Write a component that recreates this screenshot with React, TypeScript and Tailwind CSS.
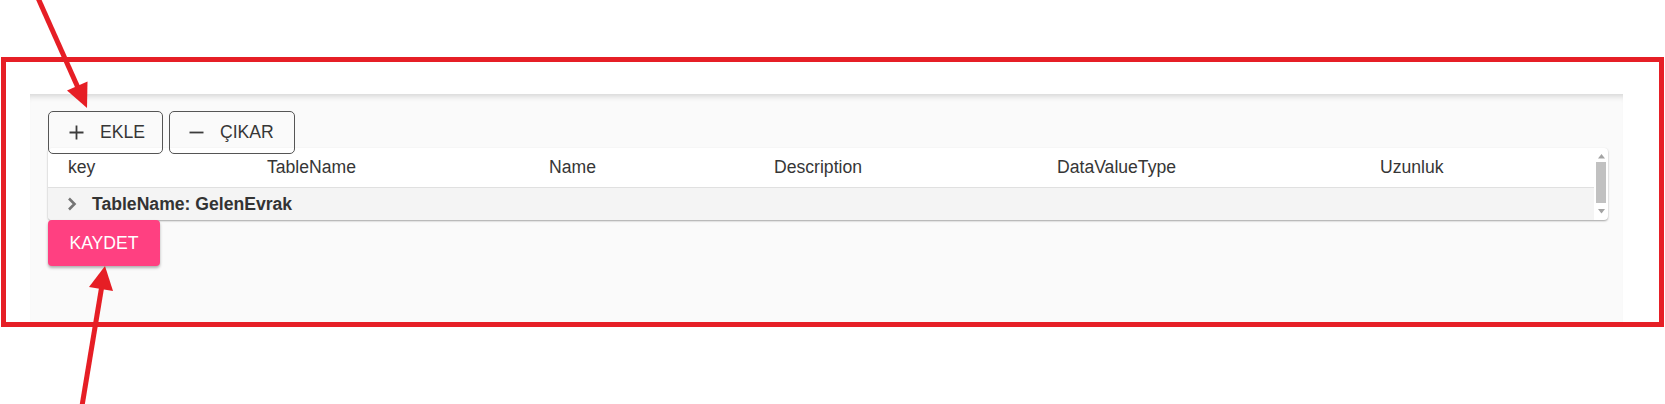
import { FC } from "react";

const font = { fontFamily: '"Liberation Sans", Arial, sans-serif' };

const columns = ["key", "TableName", "Name", "Description", "DataValueType", "Uzunluk"];

const PlusIcon: FC = () => (
  <svg width="15" height="15" viewBox="0 0 15 15" className="shrink-0">
    <path d="M7.5 0.5v14M0.5 7.5h14" stroke="#3c3c3c" strokeWidth="1.8" fill="none" />
  </svg>
);

const MinusIcon: FC = () => (
  <svg width="15" height="15" viewBox="0 0 15 15" className="shrink-0">
    <path d="M0.5 7.5h14" stroke="#3c3c3c" strokeWidth="1.8" fill="none" />
  </svg>
);

const Chevron: FC = () => (
  <svg width="10" height="14" viewBox="0 0 10 14" className="shrink-0">
    <path d="M2 1.5l5.5 5.5L2 12.5" stroke="#757575" strokeWidth="2.6" fill="none" />
  </svg>
);

// annotation arrows drawn over the screenshot
const Arrows: FC = () => (
  <svg className="absolute inset-0 pointer-events-none" width="1665" height="404" viewBox="0 0 1665 404">
    <line x1="38" y1="-2" x2="79" y2="90" stroke="#e61e25" strokeWidth="5" />
    <polygon points="87,108 67,90.6 87.5,81.6" fill="#e61e25" />
    <line x1="82" y1="406" x2="102" y2="285" stroke="#e61e25" strokeWidth="5" />
    <polygon points="105,266 89,287 113,291" fill="#e61e25" />
  </svg>
);

const App: FC = () => {
  return (
    <div className="relative w-[1665px] h-[404px] bg-white overflow-hidden pt-[57px] pl-[1px]" style={font}>
      <div className="w-[1663px] h-[270px] border-[5px] border-[#e61f26] flex flex-col pl-[24px] pt-[32px] pr-[36px]">
        <div className="flex-1 bg-[#fafafa] shadow-[inset_0_7px_6px_-5px_rgba(0,0,0,0.16)] pt-[17px] pl-[18px] pr-[15px] flex flex-col">
          <div className="relative z-10 flex gap-[6px] h-[43px]">
            <button className="w-[115px] flex items-center gap-[16px] pl-[20px] border border-[#555] rounded-[5px] text-[17.6px] text-[#363636]">
              <PlusIcon />
              <span>EKLE</span>
            </button>
            <button className="w-[126px] flex items-center gap-[16px] pl-[19px] border border-[#555] rounded-[5px] text-[17.6px] text-[#363636]">
              <MinusIcon />
              <span>ÇIKAR</span>
            </button>
          </div>

          <div className="-mt-[6px] flex bg-white rounded-[4px] shadow-[0_1px_2px_rgba(0,0,0,0.35)] h-[72px]">
            <div className="flex-1 flex flex-col">
              <div className="grid grid-cols-[199px_282px_225px_283px_323px_1fr] pl-[20px] pt-[9px] h-[40px] border-b border-[#e0e0e0] text-[17.6px] leading-[20px] text-[#363636]">
                {columns.map((c) => (
                  <div key={c}>{c}</div>
                ))}
              </div>
              <div className="flex-1 bg-[#f4f4f4] flex items-center gap-[15px] pl-[19px] rounded-bl-[4px]">
                <Chevron />
                <span className="font-bold text-[17.6px] leading-[20px] text-[#333]">TableName: GelenEvrak</span>
              </div>
            </div>
            <div className="w-[14px] flex flex-col items-center pt-[6px]">
              <svg width="7" height="5" viewBox="0 0 7 5">
                <polygon points="3.5,0 7,4.5 0,4.5" fill="#a3a3a3" />
              </svg>
              <div className="mt-[3px] w-[10px] h-[41px] bg-[#c1c1c1]" />
              <svg width="7" height="5" viewBox="0 0 7 5" className="mt-[6px]">
                <polygon points="0,0 7,0 3.5,4.5" fill="#a3a3a3" />
              </svg>
            </div>
          </div>

          <div>
            <button className="w-[112px] h-[46px] bg-[#ff4081] rounded-[4px] text-white text-[17.6px] shadow-[0_2px_3px_rgba(0,0,0,0.3)]">
              KAYDET
            </button>
          </div>
        </div>
      </div>
      <Arrows />
    </div>
  );
};

export default App;
